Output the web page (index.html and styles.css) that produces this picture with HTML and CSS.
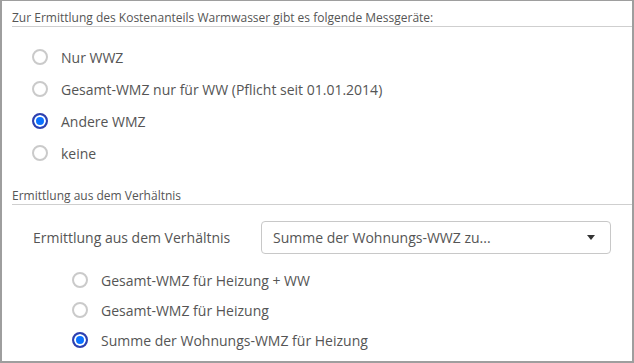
FILE: index.html
```html
<!DOCTYPE html>
<html lang="de">
<head>
<meta charset="utf-8">
<link rel="stylesheet" href="styles.css">
</head>
<body>
<div class="panel">
  <section class="group">
    <div class="legend">Zur Ermittlung des Kostenanteils Warmwasser gibt es folgende Messgeräte:</div>
    <div class="options main-options">
      <label class="option"><span class="radio"></span><span class="text">Nur WWZ</span></label>
      <label class="option"><span class="radio"></span><span class="text">Gesamt-WMZ nur für WW (Pflicht seit 01.01.2014)</span></label>
      <label class="option"><span class="radio checked"></span><span class="text">Andere WMZ</span></label>
      <label class="option"><span class="radio"></span><span class="text">keine</span></label>
    </div>
  </section>
  <section class="group second">
    <div class="legend">Ermittlung aus dem Verhältnis</div>
    <div class="field-row">
      <span class="field-label">Ermittlung aus dem Verhältnis</span>
      <div class="select">
        <span class="select-text">Summe der Wohnungs-WWZ zu...</span>
        <span class="caret"></span>
      </div>
    </div>
    <div class="options sub-options">
      <label class="option sub"><span class="radio"></span><span class="text">Gesamt-WMZ für Heizung + WW</span></label>
      <label class="option sub"><span class="radio"></span><span class="text">Gesamt-WMZ für Heizung</span></label>
      <label class="option sub"><span class="radio checked"></span><span class="text">Summe der Wohnungs-WMZ für Heizung</span></label>
    </div>
  </section>
</div>
</body>
</html>
```
FILE: styles.css
```css
* { box-sizing: border-box; }
html, body { margin: 0; padding: 0; background: #fff; }
body {
  font-family: "Open Sans", "DejaVu Sans", sans-serif;
  color: #555;
}
.panel {
  width: 634px;
  height: 363px;
  border-style: solid;
  border-color: #9e9e9e;
  border-width: 1px 2px 2px 2px;
  padding: 8px 0 0 10px;
  display: flex;
  flex-direction: column;
}
.legend {
  font-size: 12px;
  line-height: 17px;
  color: #555;
  border-bottom: 1px solid #cfcfcf;
  white-space: nowrap;
}
.options {
  display: flex;
  flex-direction: column;
}
.main-options {
  margin-top: 14px;
  padding-left: 20px;
}
.option {
  display: flex;
  align-items: center;
  height: 32px;
  font-size: 14px;
  color: #555;
}
.radio {
  width: 16px;
  height: 16px;
  border-radius: 50%;
  border: 2px solid #cacaca;
  background: #fff;
  flex: none;
  margin-right: 13px;
}
.radio.checked {
  border-color: #2f3fae;
  background: #0a72ff;
  box-shadow: inset 0 0 0 2px #fff;
}
.second {
  margin-top: 18px;
}
.field-row {
  display: flex;
  align-items: center;
  margin-top: 16px;
  padding-left: 21px;
  padding-right: 21px;
}
.field-label {
  width: 228px;
  font-size: 14px;
  color: #555;
}
.select {
  flex: 1;
  height: 33px;
  border: 1px solid #c8c8c8;
  border-radius: 4px;
  display: flex;
  align-items: center;
  justify-content: space-between;
  padding: 0 15px 0 11px;
  font-size: 14px;
  color: #555;
}
.caret {
  width: 0;
  height: 0;
  border-left: 4px solid transparent;
  border-right: 4px solid transparent;
  border-top: 5px solid #333;
}
.sub-options {
  margin-top: 11px;
  padding-left: 60px;
}
.option.sub {
  height: 30px;
}
```
